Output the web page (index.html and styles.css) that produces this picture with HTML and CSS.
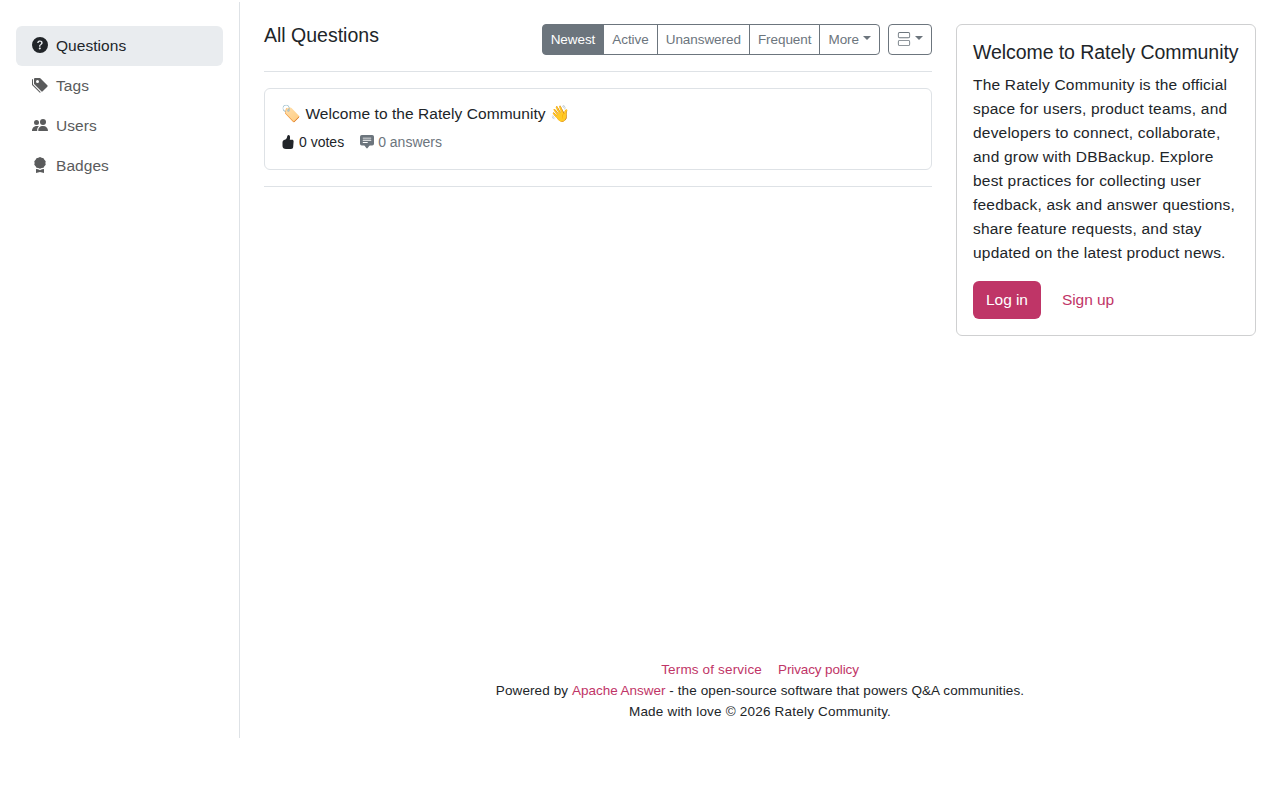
FILE: index.html
```
<!DOCTYPE html>
<html lang="en">
<head>
    <meta charset="UTF-8">
    <meta name="viewport" content="width=device-width, initial-scale=1.0">
    <title>All Questions - Rately Community</title>
    <link rel="stylesheet" href="styles.css">
</head>
<body>
    <div class="layout">
        <nav class="sidebar">
            <a class="nav-link active" href="#">
                <svg class="icon" viewBox="0 0 16 16"><path fill-rule="evenodd" d="M16 8A8 8 0 1 1 0 8a8 8 0 0 1 16 0zM5.5 6.03h.83c.13 0 .24-.11.25-.25.09-.65.54-1.13 1.34-1.13.69 0 1.31.34 1.31 1.17 0 .64-.38.93-.97 1.38-.68.49-1.21 1.06-1.17 1.99v.22c0 .14.11.25.25.25h.81c.14 0 .25-.11.25-.25v-.1c0-.72.27-.93 1.01-1.49.61-.46 1.24-.98 1.24-2.06 0-1.51-1.27-2.24-2.67-2.24-1.27 0-2.65.59-2.75 2.29 0 .12.11.22.27.22zM7.82 12.4c.61 0 1.03-.4 1.03-.93 0-.55-.42-.94-1.03-.94-.58 0-1.01.39-1.01.94 0 .53.43.93 1.01.93z"/></svg>
                <span>Questions</span>
            </a>
            <a class="nav-link" href="#">
                <svg class="icon" viewBox="0 0 16 16"><path fill-rule="evenodd" d="M2 2a1 1 0 0 1 1-1h4.59a1 1 0 0 1 .7.29l7 7a1 1 0 0 1 0 1.42l-4.58 4.58a1 1 0 0 1-1.42 0l-7-7A1 1 0 0 1 2 6.59V2zm3.5 4a1.5 1.5 0 1 0 0-3 1.5 1.5 0 0 0 0 3z"/><path d="M1.3 7.79A1 1 0 0 1 1 7.09V2a1 1 0 0 0-1 1v4.59a1 1 0 0 0 .29.7l7 7a1 1 0 0 0 1.42 0l.04-.04L1.3 7.79z"/></svg>
                <span>Tags</span>
            </a>
            <a class="nav-link" href="#">
                <svg class="icon" viewBox="0 0 16 16"><circle cx="11" cy="5" r="3"/><path d="M6.3 14c-.3-3 1.5-5 4.7-5s5 2 5 5z"/><circle cx="4.5" cy="5.5" r="2.5"/><path d="M5.2 14c-.2-2 .4-3.5 1.7-4.7C3 8.4 0 10.5 0 14z"/></svg>
                <span>Users</span>
            </a>
            <a class="nav-link" href="#">
                <svg class="icon" viewBox="0 0 16 16"><path d="m8 0 1.67.86 1.86.28.84 1.69 1.34 1.32L13.4 6l.31 1.85-1.34 1.32-.84 1.5-1.86.28L8 11.7l-1.67-.75-1.86-.28-.84-1.5-1.34-1.32L2.6 6l-.31-1.85 1.34-1.32.84-1.69L6.33.86 8 0z"/><path d="M4 12v4l4-1 4 1v-4l-2 .3-2 .9-2-.9L4 12z"/></svg>
                <span>Badges</span>
            </a>
        </nav>

        <div class="page">
            <div class="content">
                <main class="questions">
                    <div class="list-header">
                        <h1>All Questions</h1>
                        <div class="toolbar">
                            <div class="btn-group">
                                <button class="btn-sm active">Newest</button>
                                <button class="btn-sm">Active</button>
                                <button class="btn-sm">Unanswered</button>
                                <button class="btn-sm">Frequent</button>
                                <button class="btn-sm caret">More</button>
                            </div>
                            <button class="btn-sm caret" aria-label="View">
                                <svg viewBox="0 0 16 16"><path d="M3 0h10a2 2 0 0 1 2 2v3a2 2 0 0 1-2 2H3a2 2 0 0 1-2-2V2a2 2 0 0 1 2-2zm0 1a1 1 0 0 0-1 1v3a1 1 0 0 0 1 1h10a1 1 0 0 0 1-1V2a1 1 0 0 0-1-1H3zm0 8h10a2 2 0 0 1 2 2v3a2 2 0 0 1-2 2H3a2 2 0 0 1-2-2v-3a2 2 0 0 1 2-2zm0 1a1 1 0 0 0-1 1v3a1 1 0 0 0 1 1h10a1 1 0 0 0 1-1v-3a1 1 0 0 0-1-1H3z"/></svg>
                            </button>
                        </div>
                    </div>

                    <div class="list">
                        <article class="question">
                            <h2>🏷️ <span>Welcome to the Rately Community</span> 👋</h2>
                            <div class="meta">
                                <span class="votes"><svg viewBox="0 0 14 14"><path d="M7 .2C8.1-.2 9 .6 9 2c.1 1.1 0 2-.2 2.8h2.3c1 0 1.6.8 1.5 1.7l-.4 5.2c-.1 1.3-.8 2.3-2.2 2.3H5C2.8 14 1.5 13 1.5 11V7.6C1.5 5.9 2.4 5 3.9 4.7 5.3 4 6 3 6.2 1.4c0-.5.2-1 .8-1.2z"/></svg>0 votes</span>
                                <span class="answers"><svg viewBox="0 0 16 16"><path fill-rule="evenodd" d="M0 2a2 2 0 0 1 2-2h12a2 2 0 0 1 2 2v8a2 2 0 0 1-2 2h-2.5a1 1 0 0 0-.8.4l-1.9 2.53a1 1 0 0 1-1.6 0L5.3 12.4a1 1 0 0 0-.8-.4H2a2 2 0 0 1-2-2V2zm3.5 1a.5.5 0 0 0 0 1h9a.5.5 0 0 0 0-1h-9zm0 2.5a.5.5 0 0 0 0 1h9a.5.5 0 0 0 0-1h-9zm0 2.5a.5.5 0 0 0 0 1h5a.5.5 0 0 0 0-1h-5z"/></svg>0 answers</span>
                            </div>
                        </article>
                    </div>
                </main>

                <aside class="card">
                    <h2>Welcome to Rately Community</h2>
                    <p>The Rately Community is the official space for users, product teams, and developers to connect, collaborate, and grow with DBBackup. Explore best practices for collecting user feedback, ask and answer questions, share feature requests, and stay updated on the latest product news.</p>
                    <div class="actions">
                        <a class="btn primary" href="#">Log in</a>
                        <a class="btn" href="#">Sign up</a>
                    </div>
                </aside>
            </div>

            <footer class="footer">
                <div class="links">
                    <a class="terms" href="#">Terms of service</a>
                    <a class="privacy" href="#">Privacy policy</a>
                </div>
                <div class="powered">Powered by <a href="#">Apache Answer</a> - the open-source software that powers Q&amp;A communities.</div>
                <div class="copyright">Made with love © 2026 Rately Community.</div>
            </footer>
        </div>
    </div>
</body>
</html>
```
FILE: styles.css
```
* {
    margin: 0;
    padding: 0;
    box-sizing: border-box;
}

body {
    font-family: "Liberation Sans", Arial, sans-serif;
    font-size: 15.5px;
    line-height: 24px;
    color: #212529;
    background: #fff;
}

a {
    color: #bf3567;
    text-decoration: none;
}

svg {
    fill: currentColor;
    flex-shrink: 0;
}

h1,
h2 {
    font-weight: 400;
}

.layout {
    display: flex;
    height: 736px;
    margin-top: 2px;
}

.sidebar {
    width: 240px;
    padding: 24px 16px;
    border-right: 1px solid #dee2e6;
    letter-spacing: 0.05px;
}

.nav-link {
    display: flex;
    align-items: center;
    gap: 8px;
    height: 40px;
    padding: 0 16px;
    border-radius: 6px;
    color: #5a5b5c;
}

.nav-link.active {
    background: #e9ecef;
    color: #212529;
}

.icon {
    width: 16px;
    height: 16px;
    margin-top: -2px;
}

.page {
    flex: 1;
    display: flex;
    flex-direction: column;
    justify-content: space-between;
    padding: 22px 24px 16px;
}

.content {
    display: flex;
    align-items: flex-start;
    gap: 24px;
}

.questions {
    flex: 1;
}

.list-header {
    display: flex;
    justify-content: space-between;
    margin-bottom: 16px;
}

.list-header h1 {
    font-size: 19.5px;
    line-height: 23px;
}

.toolbar {
    display: flex;
    gap: 8px;
}

.btn-group {
    display: flex;
}

.btn-sm {
    display: flex;
    align-items: center;
    height: 31px;
    padding: 0 8px;
    border: 1px solid #6c757d;
    border-radius: 4px;
    background: #fff;
    color: #6c757d;
    font-family: inherit;
    font-size: 13.5px;
    line-height: 21px;
    letter-spacing: -0.06px;
}

.btn-group .btn-sm {
    border-radius: 0;
}

.btn-group .btn-sm + .btn-sm {
    margin-left: -1px;
}

.btn-group .btn-sm:first-child {
    border-radius: 4px 0 0 4px;
}

.btn-group .btn-sm:last-child {
    border-radius: 0 4px 4px 0;
}

.btn-sm.active {
    background: #6c757d;
    color: #fff;
}

.btn-sm svg {
    width: 14px;
    height: 14px;
    margin-top: -1px;
}

.caret::after {
    content: "";
    margin: -3px 0 0 4px;
    border-top: 4px solid;
    border-left: 4px solid transparent;
    border-right: 4px solid transparent;
}

.list {
    padding: 16px 0;
    border-top: 1px solid #dee2e6;
    border-bottom: 1px solid #dee2e6;
}

.question {
    height: 82px;
    padding: 13px 16px;
    border: 1px solid #dee2e6;
    border-radius: 6px;
}

.question h2 {
    font-size: 16px;
}

.question h2 span {
    font-size: 15.5px;
    letter-spacing: 0.06px;
}

.meta {
    display: flex;
    gap: 16px;
    margin-top: 6px;
    font-size: 14px;
    line-height: 21px;
}

.meta span {
    display: flex;
    align-items: center;
    gap: 4px;
}

.meta svg {
    width: 14px;
    height: 14px;
    margin-top: -2px;
}

.answers {
    color: #6c757d;
}

.card {
    width: 300px;
    height: 312px;
    padding: 15px 16px;
    border: 1px solid #cfd0d1;
    border-radius: 6px;
}

.card h2 {
    margin-bottom: 9px;
    font-size: 19.5px;
    letter-spacing: -0.07px;
    white-space: nowrap;
}

.card p {
    margin-bottom: 16px;
    letter-spacing: 0.2px;
}

.actions {
    display: flex;
    gap: 8px;
}

.btn {
    height: 38px;
    padding: 7px 13px;
    border-radius: 6px;
    letter-spacing: -0.05px;
}

.btn.primary {
    background: #bf3567;
    color: #fff;
}

.footer {
    font-size: 13.5px;
    line-height: 21px;
    text-align: center;
}

.links {
    display: flex;
    justify-content: center;
    gap: 16px;
}

.terms {
    letter-spacing: 0.16px;
}

.privacy {
    letter-spacing: -0.12px;
}

.powered {
    letter-spacing: 0.11px;
}

.powered a {
    letter-spacing: -0.04px;
}

.copyright {
    letter-spacing: 0.2px;
}
```
